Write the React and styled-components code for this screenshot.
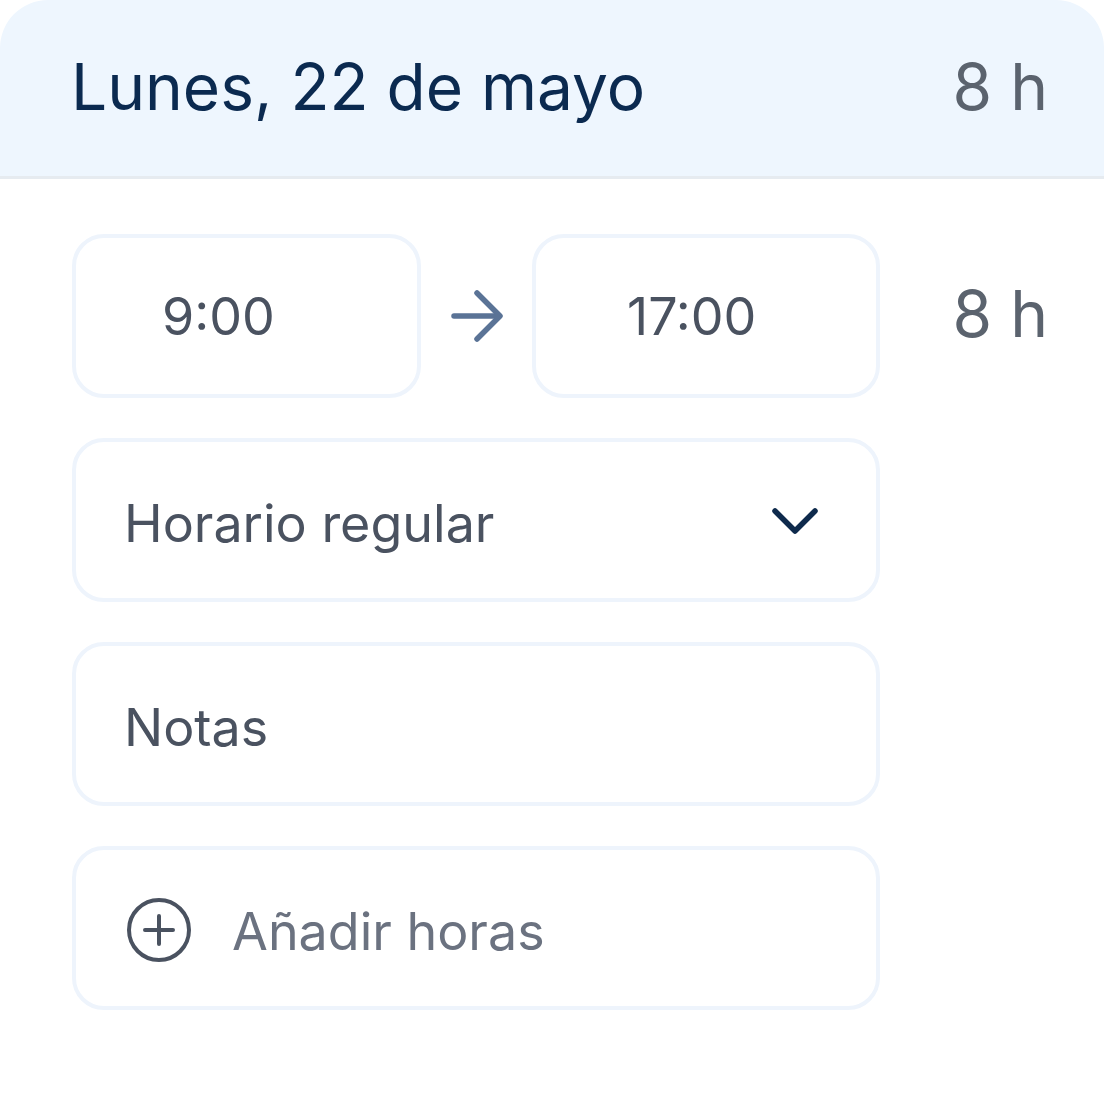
import React from "react";
import styled, { createGlobalStyle } from "styled-components";

const Global = createGlobalStyle`
  html, body { margin: 0; padding: 0; background: #ffffff; }
  body { font-family: Inter, "Noto Sans", sans-serif; -webkit-font-smoothing: antialiased; }
`;

const Card = styled.div`
  width: 1104px;
  height: 1100px;
  background: #ffffff;
  border-radius: 48px 48px 0 0;
  overflow: hidden;
`;

const Header = styled.header`
  box-sizing: border-box;
  height: 179px;
  background: #eef6fe;
  border-bottom: 3px solid #e6ebf0;
  display: flex;
  align-items: center;
  justify-content: space-between;
  padding: 0 56px 4px 71px;
`;

const Title = styled.h1`
  margin: 0;
  font-size: 64px;
  font-weight: 400;
  color: #0b2a50;
`;

const Hours = styled.span`
  font-size: 64px;
  font-weight: 400;
  color: #5b636e;
`;

const Body = styled.div`
  padding: 55px 56px 0 72px;
  display: flex;
  flex-direction: column;
  gap: 40px;
`;

const TimeRow = styled.div`
  display: flex;
  align-items: center;
`;

const Field = styled.div`
  box-sizing: border-box;
  height: 164px;
  width: ${(p) => p.$width || "808px"};
  border: 4px solid #eef4fc;
  border-radius: 32px;
  display: flex;
  align-items: center;
  justify-content: space-between;
  padding: ${(p) => p.$pad || "0 58px 0 48px"};
  font-size: 52px;
  color: #4a5260;
`;

const FieldText = styled.span`
  margin-top: 6px;
`;

const ArrowWrap = styled.div`
  width: 111px;
  display: flex;
  justify-content: center;
  color: #5a7396;
`;

const RowHours = styled(Hours)`
  margin-left: auto;
  margin-top: -6px;
`;

const AddField = styled(Field)`
  justify-content: flex-start;
  gap: 40px;
  color: #6b7280;
`;

const AddIcon = styled.svg`
  width: 66px;
  height: 66px;
  flex-shrink: 0;
  margin-top: 4px;
  margin-left: 2px;
`;

const AddLabel = styled.span`
  margin-top: 6px;
`;

const Chevron = styled.svg`
  margin-top: 4px;
`;

export default function App() {
  return (
    <>
      <Global />
      <Card>
        <Header>
          <Title>Lunes, 22 de mayo</Title>
          <Hours>8 h</Hours>
        </Header>
        <Body>
          <TimeRow>
            <Field $width="349px" $pad="0 0 0 86px">
              <span>9:00</span>
            </Field>
            <ArrowWrap>
              <svg width="52" height="52" viewBox="0 0 52 52" fill="none" stroke="currentColor" strokeWidth="5.5" strokeLinecap="round" strokeLinejoin="round">
                <path d="M3 26h45" />
                <path d="M26 3l23 23-23 23" />
              </svg>
            </ArrowWrap>
            <Field $width="348px" $pad="0 0 0 91px">
              <span>17:00</span>
            </Field>
            <RowHours>8 h</RowHours>
          </TimeRow>
          <Field>
            <FieldText>Horario regular</FieldText>
            <Chevron width="46" height="30" viewBox="0 0 46 30" fill="none" stroke="#0e2a4c" strokeWidth="5.5" strokeLinecap="round" strokeLinejoin="round">
              <path d="M3 4l20 20 20-20" />
            </Chevron>
          </Field>
          <Field>
            <FieldText>Notas</FieldText>
          </Field>
          <AddField>
            <AddIcon viewBox="0 0 66 66" fill="none" stroke="#4a5260" strokeWidth="4" strokeLinecap="round">
              <circle cx="33" cy="33" r="30" />
              <path d="M33 19v28M19 33h28" />
            </AddIcon>
            <AddLabel>Añadir horas</AddLabel>
          </AddField>
        </Body>
      </Card>
    </>
  );
}
